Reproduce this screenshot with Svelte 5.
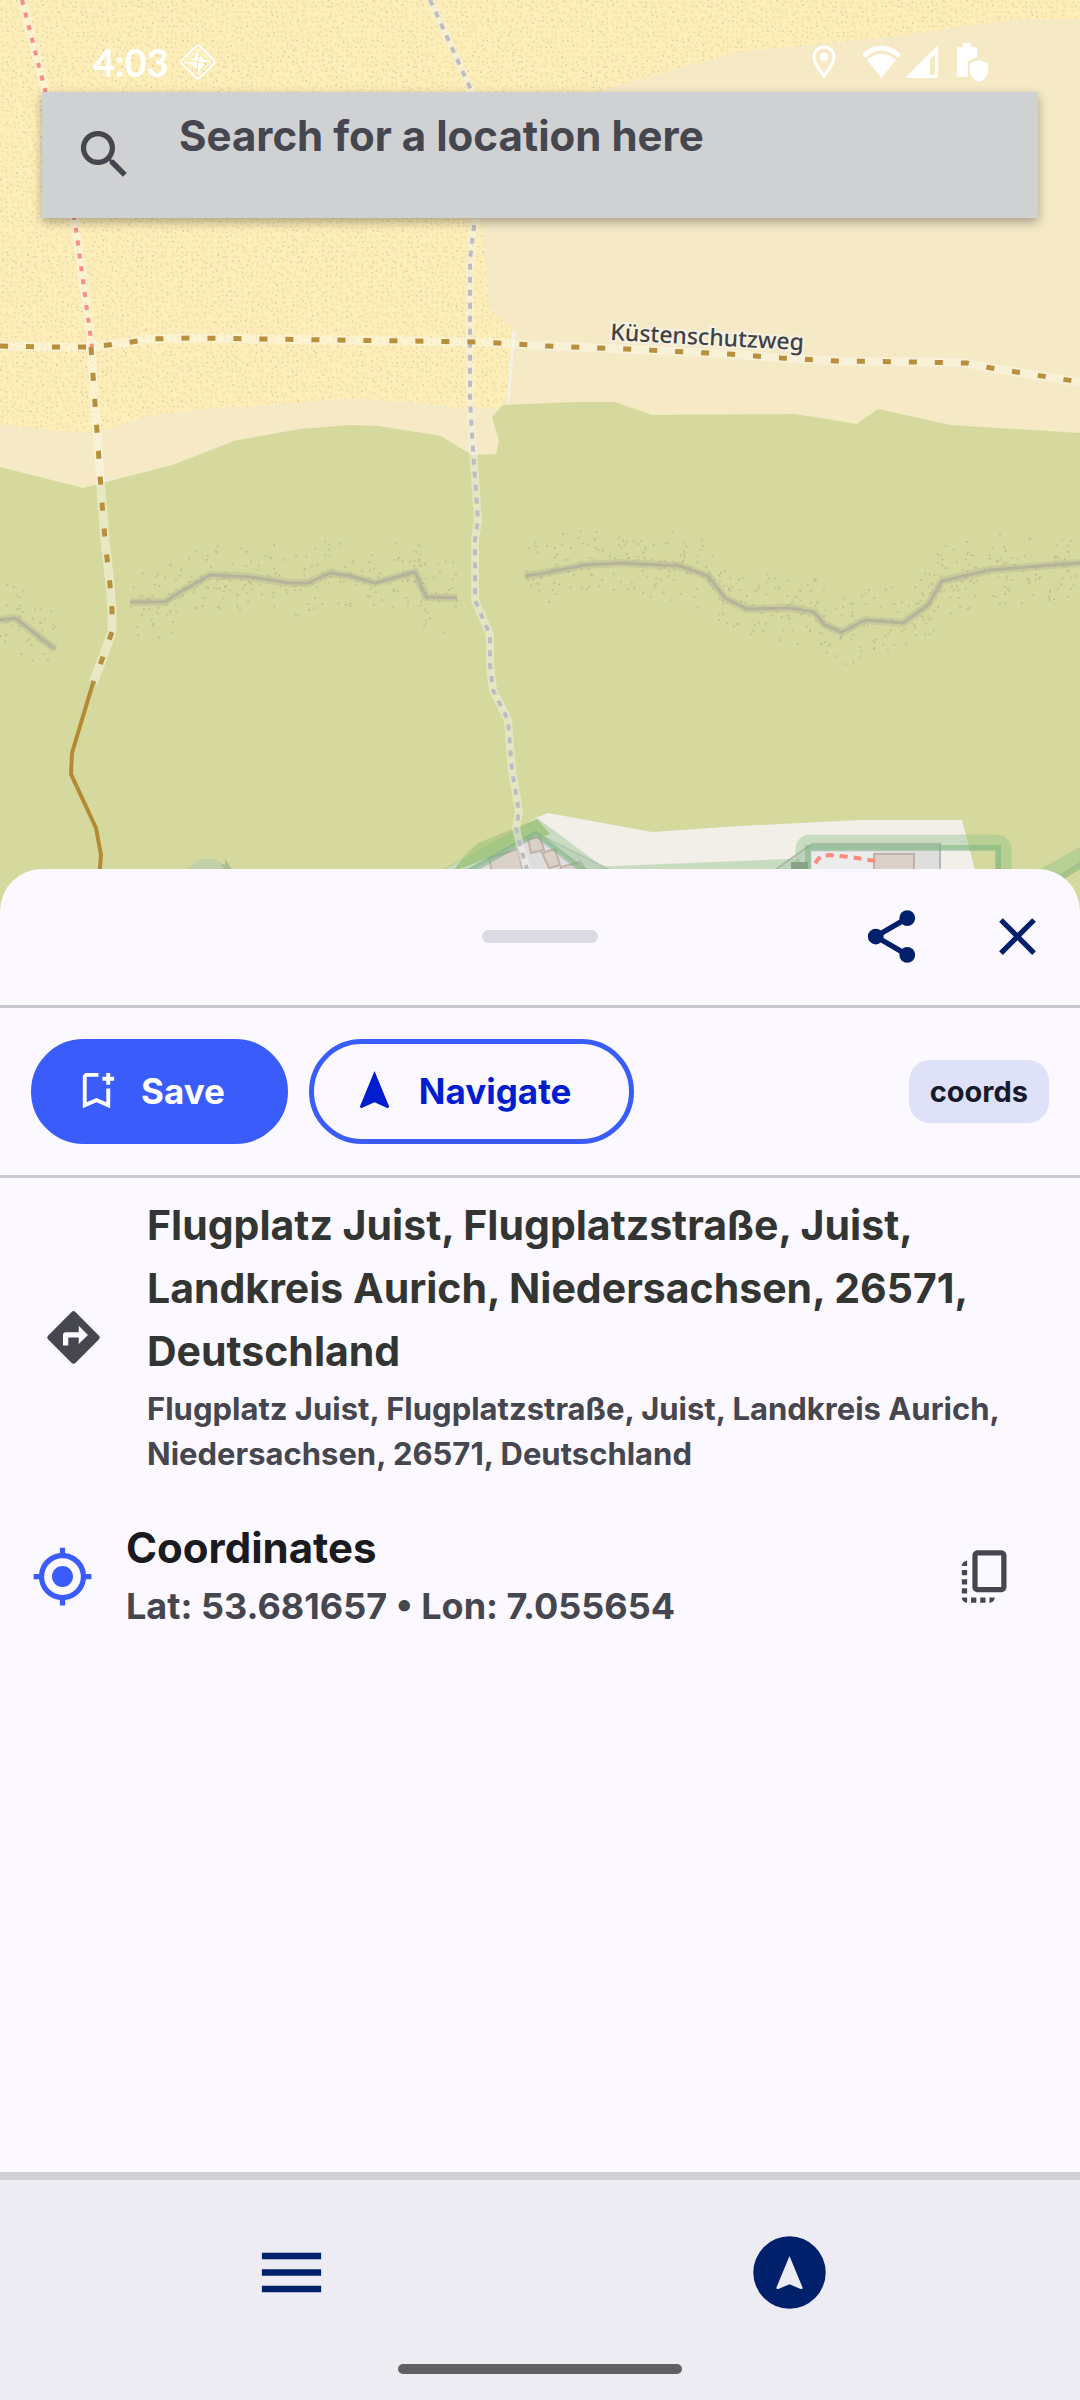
<script>
  const place = {
    name: 'Flugplatz Juist, Flugplatzstraße, Juist, Landkreis Aurich, Niedersachsen, 26571, Deutschland',
    lat: 53.681657,
    lon: 7.055654
  };

  let query = $state('');

  // Deterministic noise keeps the map texture stable between renders.
  function noise(seed) {
    let s = seed;
    return () => {
      s = (s * 16807) % 2147483647;
      return s / 2147483647;
    };
  }

  function sandDots(size, step) {
    const rnd = noise(71);
    let faint = '';
    let strong = '';
    for (let y = 0; y < size; y += step) {
      for (let x = 0; x < size; x += step) {
        const px = (x + rnd() * step * 0.6).toFixed(1);
        const py = (y + rnd() * step * 0.6).toFixed(1);
        const kind = rnd();
        if (kind > 0.8) strong += `M${px} ${py}h1.6`;
        else faint += `M${px} ${py}${kind > 0.42 ? 'h2.6' : 'v2.6'}`;
      }
    }
    return { faint, strong };
  }
  const sand = sandDots(190, 5);

  const ridges = [
    [[0, 620], [15, 618], [28, 628], [55, 649]],
    [[130, 602], [165, 602], [180, 592], [210, 575], [250, 577], [290, 583], [308, 583], [330, 573], [350, 576], [375, 583], [415, 572], [426, 597], [457, 598]],
    [[525, 576], [545, 573], [585, 565], [620, 563], [680, 566], [708, 576], [725, 598], [747, 609], [790, 608], [814, 612], [825, 625], [842, 632], [865, 620], [903, 623], [928, 605], [942, 581], [990, 570], [1040, 566], [1080, 563]]
  ];

  function ridgeDots(points, seed) {
    const rnd = noise(seed);
    let d = '';
    for (let i = 1; i < points.length; i++) {
      const [x1, y1] = points[i - 1];
      const [x2, y2] = points[i];
      const count = Math.round(Math.hypot(x2 - x1, y2 - y1) * 0.95);
      for (let n = 0; n < count; n++) {
        const t = rnd();
        const side = rnd() * 2 - 1;
        const spread = side * Math.abs(side) * 36;
        d += `M${(x1 + (x2 - x1) * t).toFixed(1)} ${(y1 + (y2 - y1) * t + spread).toFixed(1)}h1.8`;
      }
    }
    return d;
  }
  const scatter = ridges.map((r, i) => ridgeDots(r, 911 + i * 37)).join('');

  const redPath = 'M22 0L45 90L75 222L92 347';
  const greyPath = 'M430 0L437 15L471 90L475 218L470 260V400L473 450L478 520L475 540V600L490 635V665L493 690L508 720L512 770L519 812L516 828L520 845L530 880';
  const coastPath = 'M0 346L50 347L91 347L125 343L150 339L190 338L480 342L547 346L626 349L729 354L781 358L836 361L915 362L967 363L991 368L1080 382';
  const duneTrail = 'M91 347L98 445L101 490L105 540L110 585L112 610V632L100 665L93 683';
</script>

<div class="screen">
  <section class="map-area" aria-label="Map">
    <svg class="map" viewBox="0 0 1080 912" preserveAspectRatio="xMidYMin slice" role="img" aria-label="Dunes of Juist">
      <defs>
        <pattern id="sand" width="190" height="190" patternUnits="userSpaceOnUse">
          <rect width="190" height="190" fill="#fdeeb9" />
          <path d={sand.faint} stroke="#f1e1ab" stroke-width="1.7" />
          <path d={sand.strong} stroke="#dccf9c" stroke-width="1.6" />
        </pattern>
      </defs>
      <rect width="1080" height="912" fill="#f5e9c6" />
      <path fill="url(#sand)" d="M0 0H1080V19H1020L960 27L890 37L800 46L740 52L680 68L595 92L520 140L480 218L486 267L489 308L514 330L508 403L500 408L460 408L430 404L350 398L270 405L200 409L150 416L110 428L90 433L60 431L0 424Z" />
      <path fill="#d5d99d" d="M0 467L83 488L172 465L234 441L300 429L350 425L379 426L441 436L472 455L496 454L499 441L492 417L503 405L575 402H615L652 415L795 414L857 424L878 409L950 425L1080 433V912H0Z" />
      <path d="M514 330L508 404" stroke="#f4f0e6" stroke-width="3" fill="none" />

      <path d={scatter} stroke="#b6b492" stroke-width="1.8" opacity=".7" />
      {#each ridges as ridge}
        <polyline points={ridge.join(' ')} class="ridge-soft" />
        <polyline points={ridge.join(' ')} class="ridge" />
      {/each}

      <g class="casing">
        <path d={redPath} />
        <path d={coastPath} />
        <path d={duneTrail} />
      </g>

      <path fill="#f2efe9" d="M538 817L548 813L652 832L740 826L860 820H962L975 870V912H446V869Z" />
      <path fill="#b6cc86" d="M452 872L468 852L478 843L537 819L550 834Z" />
      <path fill="#dedede" d="M462 872L536 833L615 872Z" stroke="#b9beb9" />
      <path fill="#dedede" stroke="#b5b8b5" stroke-width="2" d="M772 872L812 844H940V872Z" />
      <path fill="#ececec" d="M812 852H873V872H812Z" />
      <g class="building">
        <path d="M489 858L518 849L523 872H492Z" />
        <path d="M528 839L540 837L544 850L531 853Z" />
        <path d="M542 853L555 849L560 865L549 868Z" />
        <path d="M561 867L580 862L588 872H560Z" />
        <path d="M874 854H914V880H874Z" />
      </g>
      <g class="hedge">
        <path d="M446 876L537 827L608 880" />
        <path d="M803 880V850Q803 842 811 842H996Q1004 842 1004 850V880" />
        <path d="M600 874L800 866" />
        <path d="M1036 880L1090 850" />
      </g>
      <g class="hedge-core">
        <path d="M462 876L536 834L590 876" />
        <path d="M808 880V848H998V880" />
        <path d="M1050 884L1090 860" />
      </g>
      <path d="M791 862H808V872H791Z" fill="#87a283" />
      <path d="M815 863L821 856L830 855L850 857L876 861" fill="none" stroke="#fa8a7c" stroke-width="4" stroke-dasharray="8 6" />
      <path d="M182 872L200 859H216L230 872Z" fill="#c3d2a6" />
      <path d="M219 862L225 865V859L231 868V871H219L224 868Z" fill="#a5bf93" />

      <path d={greyPath} class="casing-narrow" />
      <path d={greyPath} fill="none" stroke="#bcbdc2" stroke-width="4" stroke-dasharray="6 7" />
      <path d={redPath} fill="none" stroke="#fb8e84" stroke-width="4" stroke-dasharray="5 8" />
      <path d={coastPath} class="trail" />
      <path d={duneTrail} class="trail" />
      <path d="M93 683L72 753L71 774L96 828L101 855L99 880" fill="none" stroke="#b48b35" stroke-width="4" />
      <text class="way-label" transform="rotate(3 610 340)" x="610" y="340">Küstenschutzweg</text>
    </svg>

    <header class="status">
      <div class="status-side">
        <span class="clock">4:03</span>
        <svg width="38" height="38" viewBox="0 0 38 38" fill="none" aria-hidden="true">
          <rect x="6.500" y="6.500" width="25" height="25" rx="2.500" stroke="#fff" stroke-width="2" transform="rotate(45 19 19)" />
          <path fill="#fff" d="M19 6V18H14ZM32 19H20V14ZM19 32V20H24ZM6 19H18V24ZM12 17L18 12V17ZM21 12L26 17H21ZM12 21H17V26ZM21 26V21H26Z" />
          <path stroke="#fff" stroke-width="1" opacity=".7" d="M19 6L32 19L19 32L6 19Z" />
        </svg>
      </div>
      <div class="status-side">
        <svg width="24" height="36" viewBox="0 0 24 36" aria-hidden="true">
          <path fill="none" stroke="#fff" stroke-width="3" d="M12 32C9 27 2 20 2 13A10 10 0 0 1 22 13C22 20 15 27 12 32Z" />
          <circle cx="12" cy="13" r="4" fill="#fff" />
        </svg>
        <svg class="wifi" width="39" height="36" viewBox="0 0 39 36" aria-hidden="true">
          <path fill="#fff" d="M0 10Q19.500-7 39 10L36 14Q19.500-1 3 14Z" />
          <path fill="#fff" d="M5 16Q19.500 4 34 16L19.500 34Z" />
        </svg>
        <svg width="34" height="36" viewBox="0 0 34 36" aria-hidden="true">
          <path fill="#fff" fill-rule="evenodd" d="M33 1V34H0ZM30 10V31H25V15Z" />
        </svg>
        <svg class="battery" width="32" height="40" viewBox="0 0 32 40" aria-hidden="true">
          <path fill="#fff" d="M6 1H14V5H18Q20 5 20 7V15L11 19V35H2Q0 35 0 33V7Q0 5 2 5H6Z" />
          <path fill="#fff" d="M22 18L31 21V28C31 34 27 38 22 40C17 38 13 34 13 28V21Z" />
        </svg>
      </div>
    </header>

    <label class="search">
      <svg class="icon" viewBox="0 0 24 24" fill="currentColor" aria-hidden="true">
        <path d="M15.500 14h-.79l-.28-.27A6.471 6.471 0 0 0 16 9.500 6.500 6.500 0 1 0 9.500 16c1.610 0 3.090-.59 4.230-1.570l.27.28v.79l5 4.990L20.490 19l-4.990-5zm-6 0C7.010 14 5 11.990 5 9.500S7.010 5 9.500 5 14 7.010 14 9.500 11.990 14 9.500 14z" />
      </svg>
      <input type="text" bind:value={query} placeholder="Search for a location here" aria-label="Search for a location here" />
    </label>
  </section>

  <main class="sheet">
    <div class="sheet-head">
      <span class="handle"></span>
      <div class="head-actions">
        <button class="icon-button" aria-label="Share">
          <svg class="icon" viewBox="0 0 24 24" aria-hidden="true">
            <path d="M18 5L6 12L18 19" fill="none" stroke="currentColor" stroke-width="2" />
            <g fill="currentColor"><circle cx="18" cy="5" r="3" /><circle cx="6" cy="12" r="3" /><circle cx="18" cy="19" r="3" /></g>
          </svg>
        </button>
        <button class="icon-button" aria-label="Close">
          <svg class="icon" viewBox="0 0 24 24" fill="currentColor" aria-hidden="true">
            <path d="M19 6.410L17.590 5 12 10.590 6.410 5 5 6.410 10.590 12 5 17.590 6.410 19 12 13.410 17.590 19 19 17.590 13.410 12z" />
          </svg>
        </button>
      </div>
    </div>

    <div class="actions">
      <button class="pill filled">
        <svg class="icon-small" viewBox="0 0 24 24" fill="currentColor" aria-hidden="true">
          <path d="M17 11v6.970l-5-2.140-5 2.140V5h6V3H7c-1.100 0-2 .9-2 2v16l7-3 7 3V11h-2zM21 7h-2v2h-2V7h-2V5h2V3h2v2h2v2z" />
        </svg>
        Save
      </button>
      <button class="pill outlined">
        <svg class="icon-small" viewBox="0 0 24 24" fill="currentColor" aria-hidden="true">
          <path d="M12 2L4.500 20.290l.71.71L12 18l6.790 3 .71-.71z" />
        </svg>
        Navigate
      </button>
      <span class="chip">coords</span>
    </div>

    <section class="row address">
      <svg class="icon" viewBox="0 0 24 24" fill="currentColor" aria-hidden="true">
        <path d="M21.710 11.290l-9-9a.996.996 0 0 0-1.410 0l-9 9a.996.996 0 0 0 0 1.410l9 9c.39.390 1.020.390 1.410 0l9-9a.996.996 0 0 0 0-1.410zM14 14.500V12h-4v3H8v-4c0-.55.45-1 1-1h5V7.500l3.500 3.500-3.500 3.500z" />
      </svg>
      <div class="row-text">
        <h1>{place.name}</h1>
        <p class="detail">{place.name}</p>
      </div>
    </section>

    <section class="row coordinates">
      <svg class="icon target" viewBox="0 0 24 24" fill="currentColor" aria-hidden="true">
        <path d="M12 8c-2.210 0-4 1.790-4 4s1.790 4 4 4 4-1.790 4-4-1.790-4-4-4zm8.940 3A8.994 8.994 0 0 0 13 3.060V1h-2v2.060A8.994 8.994 0 0 0 3.060 11H1v2h2.060A8.994 8.994 0 0 0 11 20.940V23h2v-2.060A8.994 8.994 0 0 0 20.940 13H23v-2h-2.060zM12 19c-3.870 0-7-3.130-7-7s3.130-7 7-7 7 3.130 7 7-3.130 7-7 7z" />
      </svg>
      <div class="row-text">
        <h2>Coordinates</h2>
        <p>Lat: {place.lat} • Lon: {place.lon}</p>
      </div>
      <button class="icon-button copy" aria-label="Copy coordinates">
        <svg class="icon" viewBox="0 0 24 24" fill="currentColor" aria-hidden="true">
          <path d="M18 2H9c-1.100 0-2 .9-2 2v12c0 1.100.9 2 2 2h9c1.100 0 2-.9 2-2V4c0-1.100-.9-2-2-2zm0 14H9V4h9v12zM3 15v-2h2v2H3zm0-5.500h2v2H3v-2zM10 20h2v2h-2v-2zm-7-1.500v-2h2v2H3zM5 22c-1.100 0-2-.9-2-2h2v2zm3.500 0h-2v-2h2v2zm5 0v-2h2c0 1.100-.9 2-2 2zM5 6v2H3c0-1.100.9-2 2-2z" />
        </svg>
      </button>
    </section>
  </main>

  <nav class="bottom">
    <div class="tabs">
      <button class="tab" aria-label="Menu">
        <svg width="79" height="79" viewBox="0 0 24 24" fill="currentColor" aria-hidden="true">
          <path d="M3 18h18v-2H3v2zm0-5h18v-2H3v2zm0-7v2h18V6H3z" />
        </svg>
      </button>
      <button class="tab" aria-label="Map">
        <svg width="79" height="79" viewBox="0 0 24 24" aria-hidden="true">
          <circle cx="12" cy="12" r="11" fill="currentColor" />
          <path fill="#edecf3" d="M12 7L8 16.600Q8 17.200 8.600 17L12 15.600L15.400 17Q16 17.200 16 16.600Z" />
        </svg>
      </button>
    </div>
    <span class="home"></span>
  </nav>
</div>

<style>
  :global(body) {
    margin: 0;
    background: #fbf8ff;
  }
  .screen {
    display: flex;
    flex-direction: column;
    min-height: 100vh;
    font-family: Inter, 'Liberation Sans', sans-serif;
    font-weight: 700;
    color: #45464e;
    background: #fbf8ff;
  }
  button {
    margin: 0;
    padding: 0;
    border: 0;
    background: none;
    color: inherit;
    font: inherit;
    cursor: pointer;
  }
  svg {
    display: block;
    flex: none;
  }
  .icon {
    width: 63px;
    height: 63px;
  }
  .icon-small {
    width: 47px;
    height: 47px;
  }

  .map-area {
    position: relative;
    height: 912px;
    overflow: hidden;
  }
  .map {
    position: absolute;
    inset: 0;
    width: 100%;
    height: 100%;
  }
  .ridge,
  .ridge-soft {
    fill: none;
    stroke-linejoin: round;
    stroke: #b5b399;
    stroke-width: 3;
  }
  .ridge-soft {
    stroke-width: 8;
    opacity: 0.4;
  }
  .casing path,
  .casing-narrow {
    fill: none;
    stroke: #fbf7e8;
    stroke-width: 9;
    stroke-linejoin: round;
    opacity: 0.5;
  }
  .casing-narrow {
    stroke: #f4f1ea;
    stroke-width: 8;
  }
  .trail {
    fill: none;
    stroke: #b88f3d;
    stroke-width: 5;
    stroke-dasharray: 8 18;
  }
  .building path {
    fill: #d9d0c9;
    stroke: #c2b2a8;
    stroke-width: 2;
  }
  .hedge path {
    fill: none;
    stroke: #8cc088;
    stroke-opacity: 0.4;
    stroke-width: 15;
  }
  .hedge-core path {
    fill: none;
    stroke: #6fae78;
    stroke-opacity: 0.45;
    stroke-width: 6;
  }
  .way-label {
    font: 500 23px 'Noto Sans', sans-serif;
    fill: #404044;
    stroke: #f6f1e2;
    stroke-width: 4px;
    paint-order: stroke;
  }

  .status {
    position: relative;
    display: flex;
    justify-content: space-between;
    align-items: center;
    box-sizing: border-box;
    height: 92px;
    padding: 32px 91px 0 93px;
  }
  .status-side {
    display: flex;
    align-items: center;
    gap: 4px;
  }
  .status-side:first-child {
    gap: 10px;
  }
  .clock {
    font: 700 38px Lato, sans-serif;
    color: #fff;
  }
  .wifi {
    margin-left: 22px;
  }
  .battery {
    margin-left: 14px;
  }

  .search {
    position: relative;
    display: flex;
    align-items: center;
    gap: 43px;
    box-sizing: border-box;
    height: 126px;
    margin: 0 42px;
    padding: 0 0 2px 31px;
    background: #d0d1d3;
    box-shadow: 0 4px 10px rgba(0, 0, 0, 0.32);
    color: #45464e;
  }
  .search input {
    flex: 1;
    align-self: flex-start;
    min-width: 0;
    height: 86px;
    padding: 0;
    border: 0;
    outline: 0;
    background: none;
    color: inherit;
    font: inherit;
    font-size: 42px;
  }
  .search input::placeholder {
    color: #45464e;
    opacity: 1;
  }

  .sheet {
    position: relative;
    flex: 1;
    margin-top: -43px;
    border-radius: 42px 42px 0 0;
    background: #fbf8ff;
  }
  .sheet-head {
    display: grid;
    grid-template-columns: 1fr auto 1fr;
    align-items: center;
    box-sizing: border-box;
    height: 139px;
    padding-bottom: 2px;
    border-bottom: 3px solid #c9c8d2;
  }
  .handle {
    grid-column: 2;
    width: 116px;
    height: 13px;
    border-radius: 7px;
    background: #dad9e4;
  }
  .head-actions {
    display: flex;
    justify-content: flex-end;
    color: #00206b;
  }
  .icon-button {
    display: grid;
    place-items: center;
    width: 126px;
    height: 126px;
  }

  .actions {
    display: flex;
    align-items: center;
    gap: 21px;
    height: 167px;
    padding: 0 31px;
    border-bottom: 3px solid #c9c8d2;
  }
  .pill {
    display: flex;
    align-items: center;
    gap: 21px;
    box-sizing: border-box;
    height: 105px;
    padding: 0 58px 2px 37px;
    border: 5px solid #395cfb;
    border-radius: 53px;
    font-size: 35px;
  }
  .filled {
    background: #395cfb;
    color: #fff;
  }
  .outlined {
    color: #001ecf;
  }
  .chip {
    margin-left: auto;
    padding: 0 21px;
    border-radius: 21px;
    background: #dee1f8;
    color: #171a2c;
    font-size: 29px;
    line-height: 63px;
  }

  .row {
    display: flex;
    align-items: center;
  }
  .row > .icon,
  .copy {
    margin-top: 4px;
  }
  .row-text {
    flex: 1;
    min-width: 0;
  }
  h1,
  h2,
  p {
    margin: 0;
    font-weight: 700;
  }
  h1,
  h2 {
    line-height: 63px;
  }
  h1 {
    color: #333533;
    font-size: 41px;
  }
  h2 {
    color: #1a1a21;
    font-size: 42px;
  }
  p {
    font-size: 36px;
    line-height: 54px;
  }
  .detail {
    margin-top: 3px;
    font-size: 31px;
    line-height: 45px;
  }
  .address {
    gap: 42px;
    padding: 16px 42px 28px;
  }
  .coordinates {
    gap: 32px;
    padding: 12px 32px 26px 31px;
  }
  .target {
    color: #395cfb;
  }
  .copy {
    height: 63px;
  }

  .bottom {
    display: flex;
    flex-direction: column;
    align-items: center;
    box-sizing: border-box;
    height: 228px;
    border-top: 8px solid #d0d1d3;
    background: #edecf3;
    color: #00206b;
  }
  .tabs {
    display: grid;
    grid-template-columns: 1fr 1fr;
    align-self: stretch;
    height: 184px;
    padding: 0 42px;
  }
  .tab {
    display: grid;
    place-items: center;
  }
  .home {
    width: 284px;
    height: 10px;
    border-radius: 5px;
    background: #5f6062;
  }
</style>
